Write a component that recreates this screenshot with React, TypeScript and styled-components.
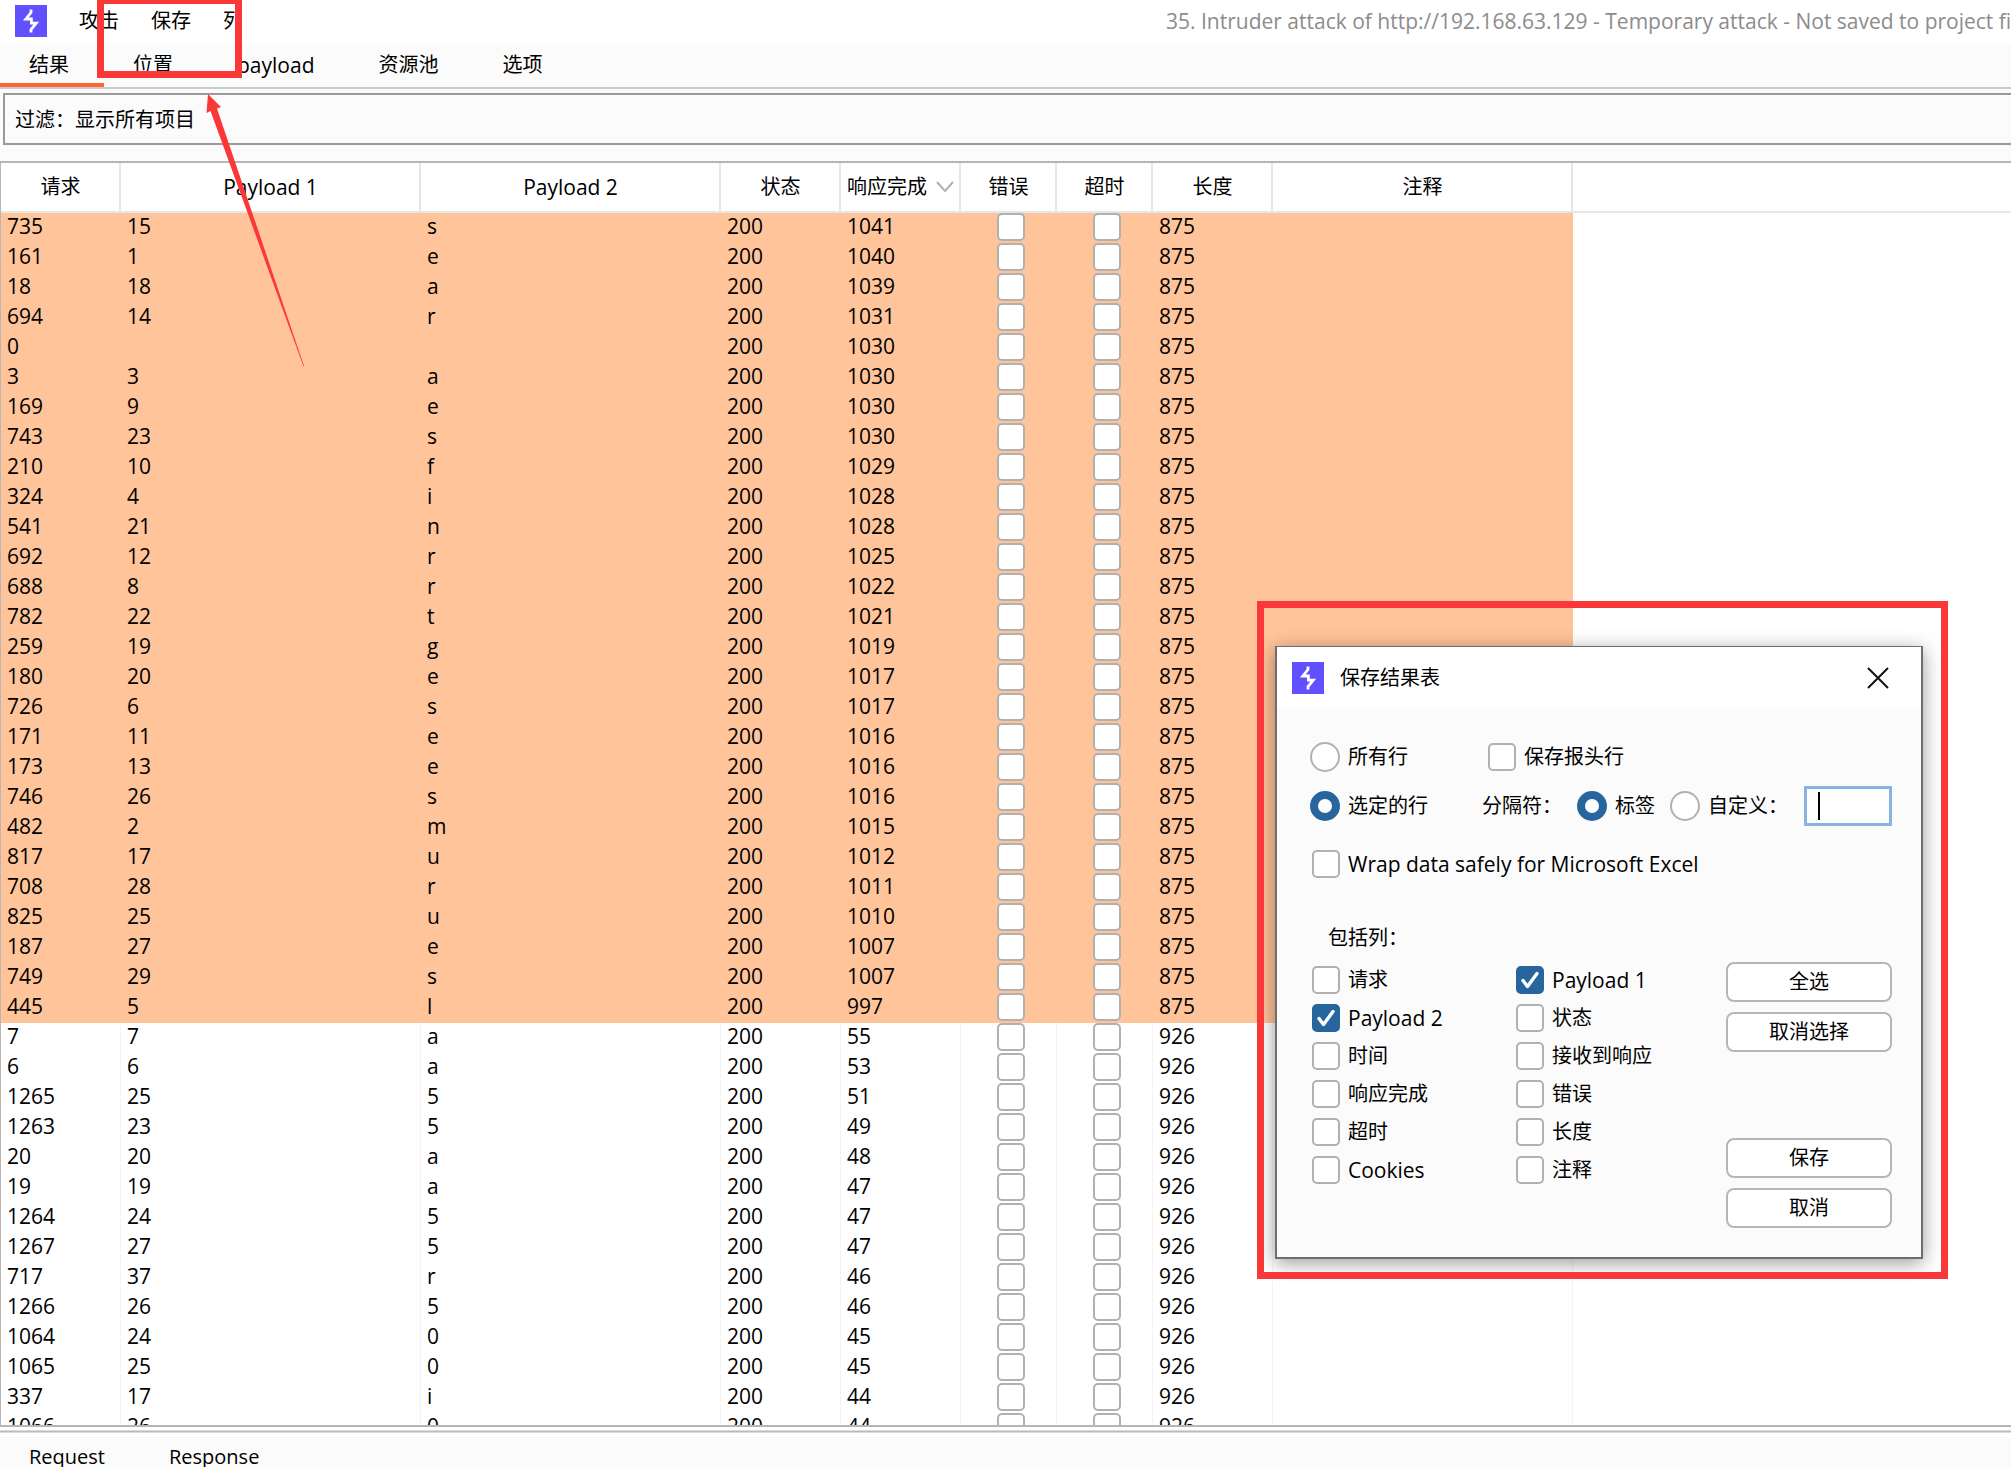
import React, { useState } from "react";
import styled, { createGlobalStyle, css } from "styled-components";

const color = {
  ink: "#000000",
  muted: "#8c8c8c",
  panel: "#fbfbfb",
  line: "#b9b5b5",
  headerLine: "#e6e6e6",
  cellLine: "#f5f5f5",
  highlight: "#ffc499",
  accent: "#ff6633",
  blue: "#27659f",
  control: "#b1b1b1",
  marker: "#fb3838",
  brand: "#6050ff",
};

/* Chinese labels are set at 20px, Latin text and numbers at 21px */
const textSize = { han: "20px", latin: "21px" };

const GlobalStyle = createGlobalStyle`
  *, *::before, *::after { box-sizing: border-box; }
  body {
    margin: 0;
    background: #ffffff;
    color: ${color.ink};
    font-family: "Open Sans", "Noto Sans CJK SC", sans-serif;
    font-size: ${textSize.han};
    line-height: 28px;
  }
  button, input { font: inherit; color: inherit; margin: 0; }
`;

const Latin = styled.span`
  font-size: ${textSize.latin};
`;

const Window = styled.div`
  position: relative;
  display: flex;
  flex-direction: column;
  height: 100vh;
  overflow: hidden;
`;

const TitleBar = styled.header`
  display: flex;
  align-items: center;
  flex: none;
  height: 45px;
  padding: 0 0 3px 15px;
`;

const Menu = styled.nav`
  display: flex;
  gap: 32px;
  width: 156px;
  margin-left: 32px;
  overflow: hidden;
`;

const MenuItem = styled.button`
  flex: none;
  padding: 0;
  border: 0;
  background: none;
`;

const WindowTitle = styled.h1`
  width: 845px;
  margin: 0 0 0 auto;
  overflow: hidden;
  white-space: nowrap;
  color: ${color.muted};
  font-size: ${textSize.latin};
  font-weight: 400;
`;

const Tabs = styled.nav`
  display: flex;
  flex: none;
  height: 44px;
  background: ${color.panel};
  border-bottom: 2px solid #c8cdcb;
`;

const Tab = styled.button<{ $active?: boolean }>`
  padding: 2px 35px 0 29px;
  border: 0;
  border-bottom: 4px solid ${(p) => (p.$active ? color.accent : "transparent")};
  background: none;
`;

const FilterArea = styled.div`
  flex: none;
  padding: 4px 0 16px 3px;
  background: ${color.panel};
`;

const FilterBar = styled.button`
  display: block;
  width: 100%;
  height: 52px;
  padding: 2px 10px 0;
  border: 2px solid #9a9a9a;
  border-right: 0;
  background: ${color.panel};
  text-align: left;
`;

const TablePane = styled.main`
  flex: 1;
  min-height: 0;
  overflow: hidden;
  border: 2px solid ${color.line};
  border-left-width: 1px;
  border-right: 0;
`;

const Table = styled.table`
  width: 100%;
  table-layout: fixed;
  border-collapse: separate;
  border-spacing: 0;
`;

const HeadCell = styled.th`
  height: 50px;
  padding: 0 5px 0 6px;
  border-right: 2px solid ${color.headerLine};
  border-bottom: 2px solid ${color.headerLine};
  font-weight: 400;
  white-space: nowrap;
  &:last-child { border-right: 0; }
`;

const SortHeader = styled.span`
  display: flex;
  align-items: center;
  justify-content: space-between;
`;

const Cell = styled.td`
  height: 30px;
  padding: 0 6px;
  border-right: 1px solid ${color.cellLine};
  font-size: ${textSize.latin};
  line-height: 26px;
  vertical-align: top;
  &:last-child { border-right: 0; }
`;

const TickCell = styled(Cell)`
  padding: 0 0 0 36px;
`;

const Row = styled.tr<{ $marked: boolean }>`
  ${(p) =>
    p.$marked &&
    css`
      ${Cell}:not(:last-child) {
        background: ${color.highlight};
        border-right-color: ${color.highlight};
      }
    `}
`;

const Splitter = styled.div`
  flex: none;
  height: 10px;
  padding-top: 3px;
  &::before {
    content: "";
    display: block;
    height: 3px;
    background: #bdbaba;
    border: solid #dcdada;
    border-width: 1px 0;
  }
`;

const MessageTabs = styled.nav`
  display: flex;
  align-items: flex-start;
  flex: none;
  height: 30px;
  padding: 6px 0 0 29px;
  gap: 64px;
  overflow: hidden;
  background: ${color.panel};
`;

const MessageTab = styled.button`
  padding: 0;
  border: 0;
  background: none;
`;

/* Tick boxes and radios */

const BoxFrame = styled.span`
  display: grid;
  flex: none;
  width: 28px;
  height: 28px;
  > * { grid-area: 1 / 1; }
`;

const BoxInput = styled.input`
  appearance: none;
  width: 28px;
  height: 28px;
  border: 2px solid ${color.control};
  border-radius: 5px;
  background: #ffffff;
  &:checked {
    border-color: ${color.blue};
    background: ${color.blue};
  }
  & + svg { pointer-events: none; visibility: hidden; }
  &:checked + svg { visibility: visible; }
`;

const RadioInput = styled.input`
  appearance: none;
  flex: none;
  width: 30px;
  height: 30px;
  border: 2px solid ${color.control};
  border-radius: 50%;
  background: #ffffff;
  &:checked { border: 8px solid ${color.blue}; }
`;

const Choice = styled.label<{ $latin?: boolean }>`
  display: flex;
  align-items: center;
  gap: 8px;
  font-size: ${(p) => (p.$latin ? textSize.latin : textSize.han)};
  white-space: nowrap;
`;

/* Dialog */

const Dialog = styled.section`
  position: absolute;
  top: 646px;
  right: 88px;
  width: 648px;
  border: 2px solid #6e6e6e;
  border-top-width: 1px;
  background: ${color.panel};
  box-shadow: 0 4px 18px rgba(0, 0, 0, 0.4);
`;

const DialogHead = styled.header`
  display: flex;
  align-items: center;
  gap: 16px;
  height: 61px;
  padding: 0 32px 0 15px;
  background: #ffffff;
`;

const DialogTitle = styled.h2`
  flex: 1;
  margin: 0;
  font-size: ${textSize.han};
  font-weight: 400;
`;

const CloseButton = styled.button`
  display: flex;
  padding: 0;
  border: 0;
  background: none;
`;

const DialogBody = styled.form`
  padding: 34px 29px 29px 33px;
`;

const OptionRow = styled.div`
  display: grid;
  grid-template-columns: 172px 1fr;
  align-items: center;
  margin-bottom: 14px;
`;

const HeaderOption = styled.div`
  padding-left: 6px;
`;

const Delimiter = styled.div`
  display: flex;
  align-items: center;
  gap: 15px;
  white-space: nowrap;
`;

const CustomField = styled.span`
  position: relative;
  margin-left: auto;
  &::after {
    content: "";
    position: absolute;
    top: 6px;
    left: 14px;
    width: 2px;
    height: 28px;
    background: ${color.ink};
  }
`;

const CustomInput = styled.input`
  display: block;
  width: 88px;
  height: 40px;
  padding: 0 12px;
  border: 3px solid #88b2e0;
  background: #ffffff;
  outline: 0;
`;

const WrapOption = styled.div`
  padding: 10px 0 46px 2px;
`;

const ColumnsLabel = styled.div`
  padding: 0 0 10px 18px;
`;

const ColumnsArea = styled.div`
  display: flex;
  justify-content: space-between;
`;

const ColumnGrid = styled.div`
  display: grid;
  grid-template-columns: 204px auto;
  align-content: start;
  row-gap: 10px;
  padding: 4px 0 0 2px;
`;

const Actions = styled.div`
  display: flex;
  flex-direction: column;
  gap: 86px;
  width: 166px;
`;

const ActionGroup = styled.div`
  display: flex;
  flex-direction: column;
  gap: 10px;
`;

const ActionButton = styled.button`
  height: 40px;
  padding: 0;
  border: 2px solid ${color.line};
  border-radius: 8px;
  background: #ffffff;
`;

/* Red marks drawn over the window */

const Marker = styled.div`
  position: absolute;
  border: 7px solid ${color.marker};
  pointer-events: none;
`;

const MenuMarker = styled(Marker)`
  top: -3px;
  left: 97px;
  width: 145px;
  height: 81px;
`;

const DialogMarker = styled(Marker)`
  top: 601px;
  right: 63px;
  width: 691px;
  height: 678px;
`;

const Arrow = styled.svg`
  position: absolute;
  top: 90px;
  left: 200px;
  pointer-events: none;
`;

function Logo() {
  return (
    <svg width="32" height="32" viewBox="0 0 32 32" aria-hidden="true">
      <rect width="32" height="32" fill={color.brand} />
      <path
        d="M16 4.5V7.5L10.8 14H16.4V18.2H21.2L16 24.5V27.5"
        fill="none"
        stroke="#ffffff"
        strokeWidth="2.8"
      />
    </svg>
  );
}

function TickBox({ id, checked = false, label }: { id?: string; checked?: boolean; label?: string }) {
  const [on, setOn] = useState(checked);
  return (
    <BoxFrame>
      <BoxInput id={id} type="checkbox" aria-label={label} checked={on} onChange={() => setOn(!on)} />
      <svg width="28" height="28" viewBox="0 0 28 28" fill="none" aria-hidden="true">
        <path d="M7 14.5L11.5 20.5L21 7.5" stroke="#ffffff" strokeWidth="3.4" strokeLinecap="round" strokeLinejoin="round" />
      </svg>
    </BoxFrame>
  );
}

type Result = [string, string, string, string, string];

const results: Result[] = [
  ["735", "15", "s", "1041", "875"],
  ["161", "1", "e", "1040", "875"],
  ["18", "18", "a", "1039", "875"],
  ["694", "14", "r", "1031", "875"],
  ["0", "", "", "1030", "875"],
  ["3", "3", "a", "1030", "875"],
  ["169", "9", "e", "1030", "875"],
  ["743", "23", "s", "1030", "875"],
  ["210", "10", "f", "1029", "875"],
  ["324", "4", "i", "1028", "875"],
  ["541", "21", "n", "1028", "875"],
  ["692", "12", "r", "1025", "875"],
  ["688", "8", "r", "1022", "875"],
  ["782", "22", "t", "1021", "875"],
  ["259", "19", "g", "1019", "875"],
  ["180", "20", "e", "1017", "875"],
  ["726", "6", "s", "1017", "875"],
  ["171", "11", "e", "1016", "875"],
  ["173", "13", "e", "1016", "875"],
  ["746", "26", "s", "1016", "875"],
  ["482", "2", "m", "1015", "875"],
  ["817", "17", "u", "1012", "875"],
  ["708", "28", "r", "1011", "875"],
  ["825", "25", "u", "1010", "875"],
  ["187", "27", "e", "1007", "875"],
  ["749", "29", "s", "1007", "875"],
  ["445", "5", "l", "997", "875"],
  ["7", "7", "a", "55", "926"],
  ["6", "6", "a", "53", "926"],
  ["1265", "25", "5", "51", "926"],
  ["1263", "23", "5", "49", "926"],
  ["20", "20", "a", "48", "926"],
  ["19", "19", "a", "47", "926"],
  ["1264", "24", "5", "47", "926"],
  ["1267", "27", "5", "47", "926"],
  ["717", "37", "r", "46", "926"],
  ["1266", "26", "5", "46", "926"],
  ["1064", "24", "0", "45", "926"],
  ["1065", "25", "0", "45", "926"],
  ["337", "17", "i", "44", "926"],
  ["1066", "26", "0", "44", "926"],
];

const columnWidths = [120, 300, 300, 120, 120, 96, 96, 120, 300];

const exportColumns: { name: string; checked?: boolean; latin?: boolean }[] = [
  { name: "请求" },
  { name: "Payload 1", checked: true, latin: true },
  { name: "Payload 2", checked: true, latin: true },
  { name: "状态" },
  { name: "时间" },
  { name: "接收到响应" },
  { name: "响应完成" },
  { name: "错误" },
  { name: "超时" },
  { name: "长度" },
  { name: "Cookies", latin: true },
  { name: "注释" },
];

function ResultsTable() {
  return (
    <Table>
      <colgroup>
        {columnWidths.map((w, i) => (
          <col key={i} width={w} />
        ))}
        <col />
      </colgroup>
      <thead>
        <tr>
          <HeadCell>请求</HeadCell>
          <HeadCell>
            <Latin>Payload 1</Latin>
          </HeadCell>
          <HeadCell>
            <Latin>Payload 2</Latin>
          </HeadCell>
          <HeadCell>状态</HeadCell>
          <HeadCell>
            <SortHeader>
              响应完成
              <svg width="18" height="12" viewBox="0 0 18 12" fill="none" aria-hidden="true">
                <path d="M1 1L9 10L17 1" stroke={color.control} strokeWidth="2" />
              </svg>
            </SortHeader>
          </HeadCell>
          <HeadCell>错误</HeadCell>
          <HeadCell>超时</HeadCell>
          <HeadCell>长度</HeadCell>
          <HeadCell>注释</HeadCell>
          <HeadCell as="td" />
        </tr>
      </thead>
      <tbody>
        {results.map(([request, first, second, completed, length]) => (
          <Row key={request} $marked={length === "875"}>
            <Cell>{request}</Cell>
            <Cell>{first}</Cell>
            <Cell>{second}</Cell>
            <Cell>200</Cell>
            <Cell>{completed}</Cell>
            <TickCell>
              <TickBox label="错误" />
            </TickCell>
            <TickCell>
              <TickBox label="超时" />
            </TickCell>
            <Cell>{length}</Cell>
            <Cell />
            <Cell />
          </Row>
        ))}
      </tbody>
    </Table>
  );
}

function SaveDialog() {
  const [rows, setRows] = useState("selected");
  const [delimiter, setDelimiter] = useState("tab");
  return (
    <Dialog role="dialog" aria-labelledby="save-title">
      <DialogHead>
        <Logo />
        <DialogTitle id="save-title">保存结果表</DialogTitle>
        <CloseButton type="button" aria-label="关闭">
          <svg width="22" height="22" viewBox="0 0 22 22" aria-hidden="true">
            <path d="M1 1L21 21M21 1L1 21" stroke="#111111" strokeWidth="2" />
          </svg>
        </CloseButton>
      </DialogHead>
      <DialogBody onSubmit={(e: React.FormEvent) => e.preventDefault()}>
        <OptionRow>
          <Choice>
            <RadioInput type="radio" name="rows" checked={rows === "all"} onChange={() => setRows("all")} />
            所有行
          </Choice>
          <HeaderOption>
            <Choice htmlFor="header-row">
              <TickBox id="header-row" />
              保存报头行
            </Choice>
          </HeaderOption>
        </OptionRow>
        <OptionRow>
          <Choice>
            <RadioInput type="radio" name="rows" checked={rows === "selected"} onChange={() => setRows("selected")} />
            选定的行
          </Choice>
          <Delimiter>
            <span>分隔符：</span>
            <Choice>
              <RadioInput type="radio" name="delimiter" checked={delimiter === "tab"} onChange={() => setDelimiter("tab")} />
              标签
            </Choice>
            <Choice>
              <RadioInput type="radio" name="delimiter" checked={delimiter === "custom"} onChange={() => setDelimiter("custom")} />
              自定义：
            </Choice>
            <CustomField>
              <CustomInput type="text" aria-label="自定义" />
            </CustomField>
          </Delimiter>
        </OptionRow>
        <WrapOption>
          <Choice htmlFor="wrap-data" $latin>
            <TickBox id="wrap-data" />
            Wrap data safely for Microsoft Excel
          </Choice>
        </WrapOption>
        <ColumnsLabel>包括列：</ColumnsLabel>
        <ColumnsArea>
          <ColumnGrid>
            {exportColumns.map(({ name, checked, latin }) => (
              <Choice key={name} htmlFor={`column-${name}`} $latin={latin}>
                <TickBox id={`column-${name}`} checked={checked} />
                {name}
              </Choice>
            ))}
          </ColumnGrid>
          <Actions>
            <ActionGroup>
              <ActionButton type="button">全选</ActionButton>
              <ActionButton type="button">取消选择</ActionButton>
            </ActionGroup>
            <ActionGroup>
              <ActionButton type="submit">保存</ActionButton>
              <ActionButton type="button">取消</ActionButton>
            </ActionGroup>
          </Actions>
        </ColumnsArea>
      </DialogBody>
    </Dialog>
  );
}

export default function App() {
  return (
    <>
      <GlobalStyle />
      <Window>
        <TitleBar>
          <Logo />
          <Menu>
            <MenuItem>攻击</MenuItem>
            <MenuItem>保存</MenuItem>
            <MenuItem>列</MenuItem>
          </Menu>
          <WindowTitle>
            35. Intruder attack of http://192.168.63.129 - Temporary attack - Not saved to project file
          </WindowTitle>
        </TitleBar>
        <Tabs>
          <Tab $active>结果</Tab>
          <Tab>位置</Tab>
          <Tab>
            <Latin>payload</Latin>
          </Tab>
          <Tab>资源池</Tab>
          <Tab>选项</Tab>
        </Tabs>
        <FilterArea>
          <FilterBar>过滤：显示所有项目</FilterBar>
        </FilterArea>
        <TablePane>
          <ResultsTable />
        </TablePane>
        <Splitter />
        <MessageTabs>
          <MessageTab>Request</MessageTab>
          <MessageTab>Response</MessageTab>
        </MessageTabs>
        <SaveDialog />
        <MenuMarker />
        <DialogMarker />
        <Arrow width="110" height="280" viewBox="200 90 110 280" aria-hidden="true">
          <path d="M208 94L221 107L217 108.5L304 366L303.4 366.2L210.5 111L206.5 113Z" fill={color.marker} />
        </Arrow>
      </Window>
    </>
  );
}
